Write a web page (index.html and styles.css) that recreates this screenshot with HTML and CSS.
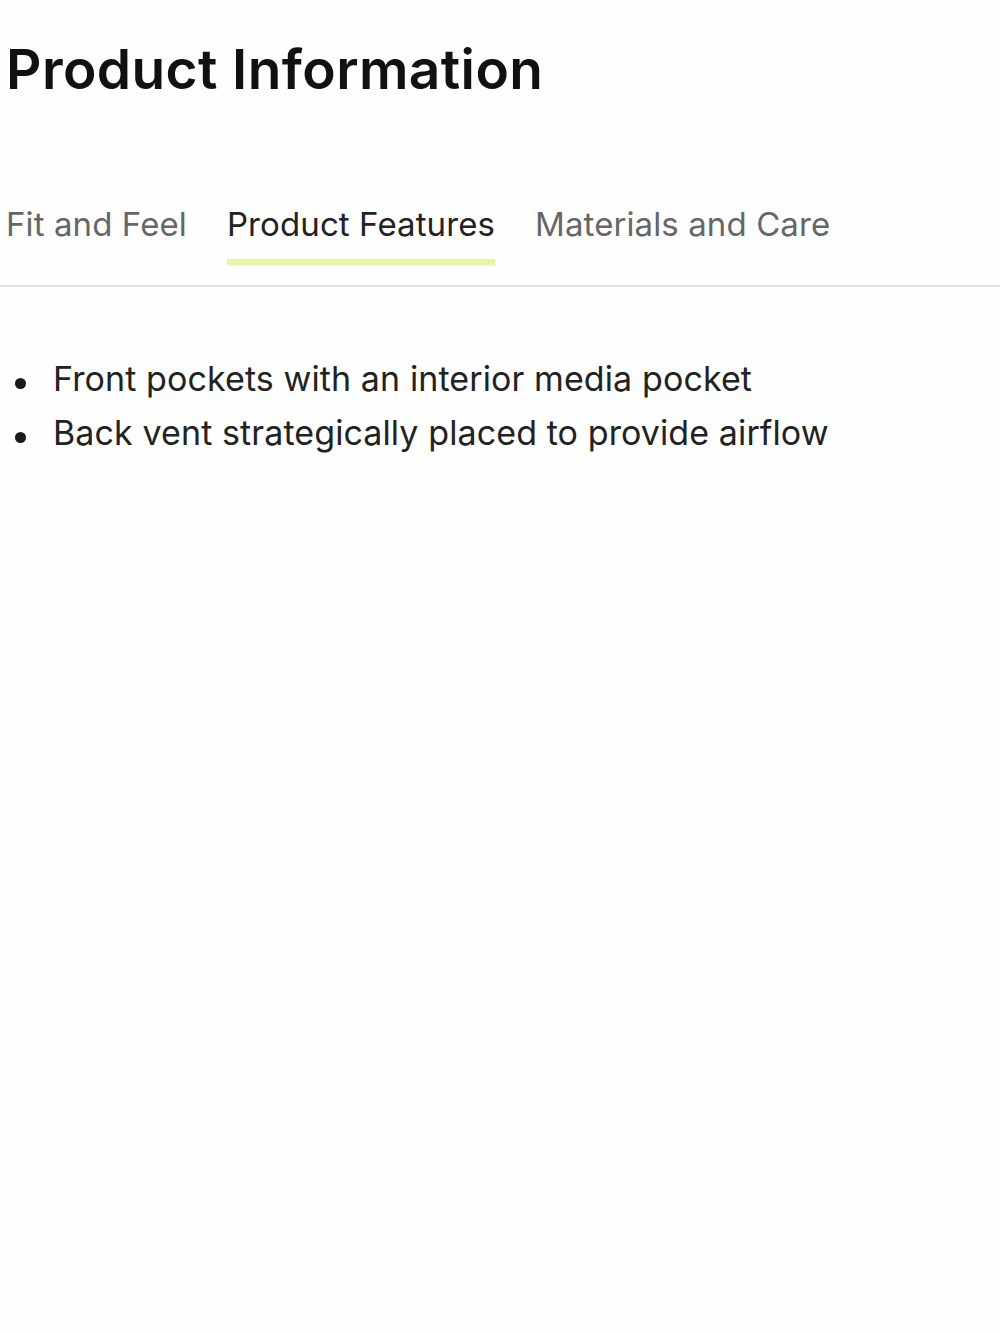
FILE: index.html
```html
<!DOCTYPE html>
<html>
<head>
<meta charset="utf-8">
<link rel="stylesheet" href="styles.css">
</head>
<body>
<main class="page">
  <h1 class="title">Product Information</h1>
  <nav class="tabs">
    <div class="tab">Fit and Feel</div>
    <div class="tab active">Product Features</div>
    <div class="tab">Materials and Care</div>
  </nav>
  <ul class="features">
    <li>Front pockets with an interior media pocket</li>
    <li>Back vent strategically placed to provide airflow</li>
  </ul>
</main>
</body>
</html>
```
FILE: styles.css
```css
html, body {
  margin: 0;
  padding: 0;
  background: #fefefe;
}
body {
  font-family: Inter, "Liberation Sans", sans-serif;
  color: #1a1a1a;
}
.page {
  padding: 0 0 0 6px;
}
.title {
  margin: 0;
  padding-top: 35px;
  font-size: 55px;
  font-weight: 600;
  letter-spacing: 0.4px;
  line-height: 68px;
  color: #111;
}
.tabs {
  display: flex;
  gap: 40px;
  margin-top: 101px;
  margin-left: -6px;
  padding-left: 6px;
  border-bottom: 2px solid #e0e0e0;
}
.tab {
  font-size: 33px;
  line-height: 40px;
  color: #666;
  padding-bottom: 15px;
  border-bottom: 6px solid transparent;
  margin-bottom: 20px;
  letter-spacing: 0.1px;
}
.tab.active {
  color: #222;
  border-bottom-color: #e2f8a4;
}
.features {
  list-style: none;
  margin: 65px 0 0 0;
  padding: 0;
  font-size: 34px;
  line-height: 54px;
  color: #222;
  letter-spacing: 0.1px;
}
.features li {
  display: flex;
  align-items: flex-start;
}
.features li::before {
  content: "";
  flex: none;
  width: 11px;
  height: 11px;
  border-radius: 50%;
  background: #1a1a1a;
  margin: 26px 27px 0 9px;
}
```
